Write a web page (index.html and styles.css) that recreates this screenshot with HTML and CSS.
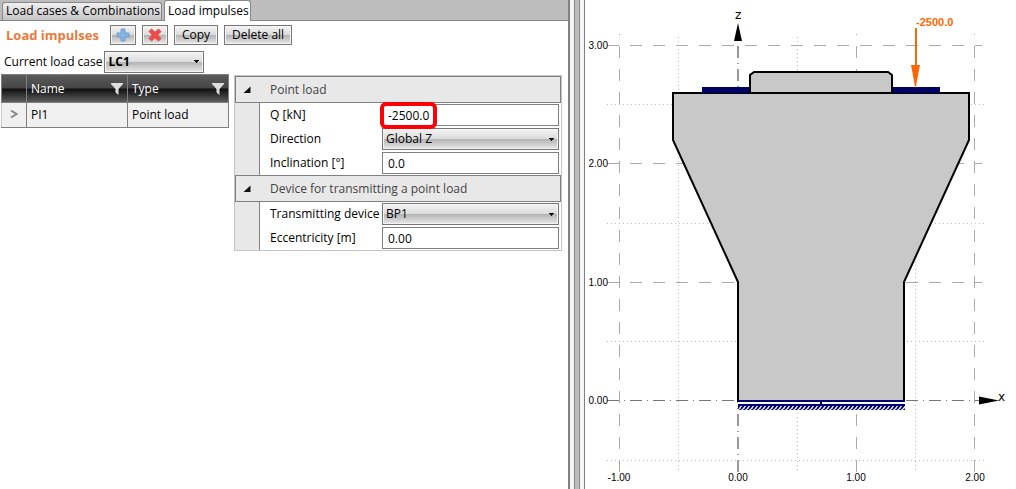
FILE: index.html
```
<!DOCTYPE html>
<html lang="en">
<head>
    <meta charset="UTF-8">
    <meta name="viewport" content="width=device-width, initial-scale=1.0">
    <title>Load impulses</title>
    <link rel="stylesheet" href="styles.css">
</head>
<body>

    <!-- Input panel -->
    <div class="panel">
        <nav class="tabs">
            <a class="tab" href="#combinations">Load cases &amp; Combinations</a>
            <a class="tab active" href="#impulses">Load impulses</a>
        </nav>

        <div class="toolbar">
            <h1>Load impulses</h1>
            <button type="button" class="icon-button" aria-label="Add">
                <svg width="14" height="14" viewBox="0 0 14 14"><path d="M5 1h4v4h4v4h-4v4h-4v-4h-4v-4h4z" fill="#84b4e4" stroke="#6f9fd0"/></svg>
            </button>
            <button type="button" class="icon-button" aria-label="Delete">
                <svg width="14" height="14" viewBox="0 0 14 14"><path d="M3.500 1L7 4.300L10.500 1L13 3.500L9.700 7L13 10.500L10.500 13L7 9.700L3.500 13L1 10.500L4.300 7L1 3.500Z" fill="#f04a4a" stroke="#e05050"/></svg>
            </button>
            <button type="button">Copy</button>
            <button type="button">Delete all</button>
        </div>

        <div class="load-case">
            <label for="loadCase">Current load case</label>
            <select id="loadCase"><option>LC1</option></select>
        </div>

        <div class="content">
            <table class="impulses">
                <thead>
                    <tr>
                        <th class="marker"></th>
                        <th><div>Name <svg width="12" height="12" viewBox="0 0 12 12"><path d="M0 0h12v1L7.500 6v6L4.500 9.500V6L0 1z"/></svg></div></th>
                        <th><div>Type <svg width="12" height="12" viewBox="0 0 12 12"><path d="M0 0h12v1L7.500 6v6L4.500 9.500V6L0 1z"/></svg></div></th>
                    </tr>
                </thead>
                <tbody>
                    <tr>
                        <td class="marker"><svg width="8" height="10" viewBox="0 0 8 10"><path d="M1 1.500L6.500 5L1 8.500"/></svg></td>
                        <td>PI1</td>
                        <td>Point load</td>
                    </tr>
                </tbody>
            </table>

            <form class="properties">
                <h2><svg width="8" height="8" viewBox="0 0 8 8"><path d="M7.500 0.500V7H0.500z"/></svg>Point load</h2>
                <div class="fields">
                    <label for="q">Q [kN]</label>
                    <div class="highlight"><input type="text" id="q" value="-2500.0"></div>
                    <label for="direction">Direction</label>
                    <select id="direction"><option>Global Z</option></select>
                    <label for="inclination">Inclination [°]</label>
                    <input type="text" id="inclination" value="0.0">
                </div>
                <h2><svg width="8" height="8" viewBox="0 0 8 8"><path d="M7.500 0.500V7H0.500z"/></svg>Device for transmitting a point load</h2>
                <div class="fields">
                    <label for="device">Transmitting device</label>
                    <select id="device"><option>BP1</option></select>
                    <label for="eccentricity">Eccentricity [m]</label>
                    <input type="text" id="eccentricity" value="0.00">
                </div>
            </form>
        </div>
    </div>

    <div class="splitter"></div>

    <!-- Section drawing -->
    <div class="drawing">
        <svg viewBox="585 0 431 489" role="img" aria-label="Section with point load">
            <defs>
                <pattern id="hatch" x="738" y="404" width="4" height="5" patternUnits="userSpaceOnUse">
                    <path d="M-1 5L3 0M3 5L7 0"/>
                </pattern>
            </defs>

            <g class="minor">
                <path d="M607 104.500H987M607 223.500H987M607 341.500H987M607 460.500H987"/>
                <path d="M678.500 37V473M797.500 37V473M915.500 37V473"/>
            </g>
            <g class="major">
                <path d="M607 45.500H982M607 163.500H982M607 282.500H982"/>
                <path d="M619.500 472V34M856.500 472V34M974.500 472V34"/>
            </g>
            <path class="axis" d="M607 400.500H980"/>
            <path class="axis z-axis" d="M738 472V40"/>
            <path d="M738 23L742 41H734zM999 400.500L979 404.500V396.500z"/>

            <g class="shape">
                <path d="M738 401V282L673 140V93H969V140L904 282V401z"/>
                <path class="plate" d="M702 87H750V93H702zM892 87H940V93H892z"/>
                <path d="M750 93V75L754 72H888L892 75V93z"/>
            </g>

            <!-- Support -->
            <path class="support-gap" d="M738 401H904V404H738z"/>
            <path class="support" d="M737 401H905M821 401V405M738 405H905"/>
            <path fill="url(#hatch)" d="M738 405H905V410H738z"/>

            <path class="load-line" d="M916 28V66"/>
            <path class="load-head" d="M911 65H920L915.500 89z"/>
            <text class="load-text" x="916" y="26">-2500.0</text>

            <text class="axis-name" x="735" y="19">z</text>
            <text class="axis-name" x="998" y="401">x</text>
            <g class="scale end">
                <text x="608" y="49">3.00</text>
                <text x="608" y="167">2.00</text>
                <text x="608" y="286">1.00</text>
                <text x="608" y="404">0.00</text>
            </g>
            <g class="scale middle">
                <text x="619" y="481">-1.00</text>
                <text x="738" y="481">0.00</text>
                <text x="856" y="481">1.00</text>
                <text x="975" y="481">2.00</text>
            </g>
        </svg>
    </div>

</body>
</html>
```
FILE: styles.css
```
/* General Styles */
*, *::after {
    box-sizing: border-box;
}
body {
    display: flex;
    min-height: 100vh;
    margin: 0;
    font-family: "Open Sans", sans-serif;
    font-size: 12px;
    line-height: 16px;
    color: #000;
    background-color: white;
}
button, input, select {
    font: inherit;
    color: inherit;
    margin: 0;
    border-radius: 0;
}

/* Input panel */
.panel {
    flex: 568;
    min-width: 0;
    border-right: 2px solid #808080;
}
.tabs {
    display: flex;
    align-items: flex-end;
    gap: 2px;
    height: 21px;
    padding-left: 2px;
    background-color: #bdbdbd;
    border-bottom: 1px solid #888;
}
.tab {
    height: 18px;
    padding: 0 1px 0 3px;
    color: black;
    text-decoration: none;
    white-space: nowrap;
    background: linear-gradient(#f0f0f0, #c4c4c4);
    border: 1px solid #888;
    border-bottom: none;
    border-radius: 3px 3px 0 0;
}
.tab.active {
    height: 21px;
    padding-top: 2px;
    margin-bottom: -1px;
    background: white;
}
.toolbar {
    display: flex;
    align-items: center;
    gap: 6px;
    height: 28px;
    padding-left: 6px;
}
.toolbar h1 {
    margin: 0 5px 0 0;
    font-size: 13px;
    line-height: 20px;
    color: #e9793a;
}
button, select {
    background: linear-gradient(#f4f4f4, #dcdcdc 48%, #b4b4b4 52%, #e8e8e8);
    border: 1px solid #777;
    box-shadow: inset 0 0 0 1px #f4f4f4;
}
button {
    height: 20px;
    padding: 0 7px;
    line-height: 16px;
}
.icon-button {
    display: flex;
    align-items: center;
    justify-content: center;
    width: 26px;
    padding: 0;
}
select {
    appearance: none;
    height: 22px;
    padding: 0 3px;
    background-image: conic-gradient(from -45deg at 50% 100%, #111 90deg, transparent 0), linear-gradient(#f4f4f4, #dcdcdc 48%, #b4b4b4 52%, #e8e8e8);
    background-repeat: no-repeat;
    background-position: right 4px center, 0 0;
    background-size: 5px 3px, 100% 100%;
}
.load-case {
    display: flex;
    align-items: center;
    gap: 2px;
    height: 25px;
    padding-left: 4px;
}
.load-case select {
    width: 100px;
    font-weight: bold;
}
.content {
    display: flex;
    align-items: flex-start;
    gap: 5px;
    padding-left: 1px;
}

/* Impulses table */
.impulses {
    width: 228px;
    table-layout: fixed;
    border-collapse: collapse;
    border: 1px solid #808080;
}
.impulses .marker {
    width: 25px;
    padding: 0;
    text-align: center;
}
.impulses th {
    height: 28px;
    padding: 0 4px;
    font-weight: normal;
    text-align: left;
    color: white;
    background: linear-gradient(#5a5a5a, #454545 48%, #101010 50%, #606060);
    border: 1px solid #808080;
}
.impulses th div {
    display: flex;
    align-items: center;
    justify-content: space-between;
}
.impulses th svg {
    fill: #ddd;
}
.impulses td {
    height: 25px;
    padding: 0 4px;
    background-color: #f0f0f0;
    border: 1px solid #808080;
    border-left-color: #ccc;
}
.impulses td svg {
    fill: none;
    stroke: #888;
    stroke-width: 2;
}

/* Properties */
.properties {
    width: 328px;
    margin-top: 1px;
    border: 1px solid #c4c4c4;
}
.properties h2 {
    display: flex;
    align-items: center;
    gap: 19px;
    height: 27px;
    margin: 0;
    padding-left: 7px;
    font-size: 12px;
    font-weight: normal;
    color: #444;
    background-color: #e8e8e8;
    border: 1px solid #808080;
}
.properties h2 svg {
    fill: #111;
}
.fields {
    display: grid;
    grid-template-columns: 112px 1fr;
    row-gap: 2px;
    align-items: center;
    margin-left: 24px;
    padding: 1px 2px 1px 10px;
    border-left: 1px solid #808080;
    box-shadow: -24px 0 0 #e8e8e8;
}
.fields label {
    white-space: nowrap;
}
.fields input {
    display: block;
    width: 100%;
    height: 22px;
    padding: 0 5px;
    background-color: white;
    border: 1px solid #808080;
}
.highlight {
    position: relative;
}
.highlight::after {
    content: "";
    position: absolute;
    top: -2px;
    left: -2px;
    width: 57px;
    height: 27px;
    border: 4px solid #fb0007;
    border-radius: 6px;
    pointer-events: none;
}

/* Splitter */
.splitter {
    flex: none;
    width: 15px;
    background: linear-gradient(to right, #f4f4f4 4px, #888 4px 5px, #bdbdbd 5px 9px, #888 9px 10px, #f4f4f4 10px);
    border-right: 1px solid #808080;
}

/* Drawing */
.drawing {
    flex: 431;
    min-width: 0;
}
.drawing svg {
    display: block;
    width: 100%;
}
.minor path {
    stroke: #bbb;
    stroke-dasharray: 1 3;
}
.major path {
    stroke: #aaa;
    stroke-dasharray: 12 11;
}
.axis {
    stroke: #777;
    stroke-dasharray: 12 5 1 5;
}
.z-axis {
    stroke: #999;
    stroke-width: 2;
}
.shape path {
    fill: #c8c8c8;
    stroke: black;
    stroke-width: 2;
}
.shape .plate {
    fill: #000066;
    stroke: none;
}
.support-gap {
    fill: white;
}
.support {
    stroke: #000070;
    stroke-width: 2;
}
#hatch path {
    stroke: #000070;
    stroke-width: 2;
}
.load-line {
    stroke: #f36c0a;
    stroke-width: 2;
}
.load-head, .load-text {
    fill: #ff6600;
}
.load-text {
    font: bold 11px "Liberation Sans", sans-serif;
}
.axis-name {
    font: 12px "DejaVu Sans", sans-serif;
}
.scale {
    font: 10px "Liberation Sans", sans-serif;
}
.end {
    text-anchor: end;
}
.middle {
    text-anchor: middle;
}
```
